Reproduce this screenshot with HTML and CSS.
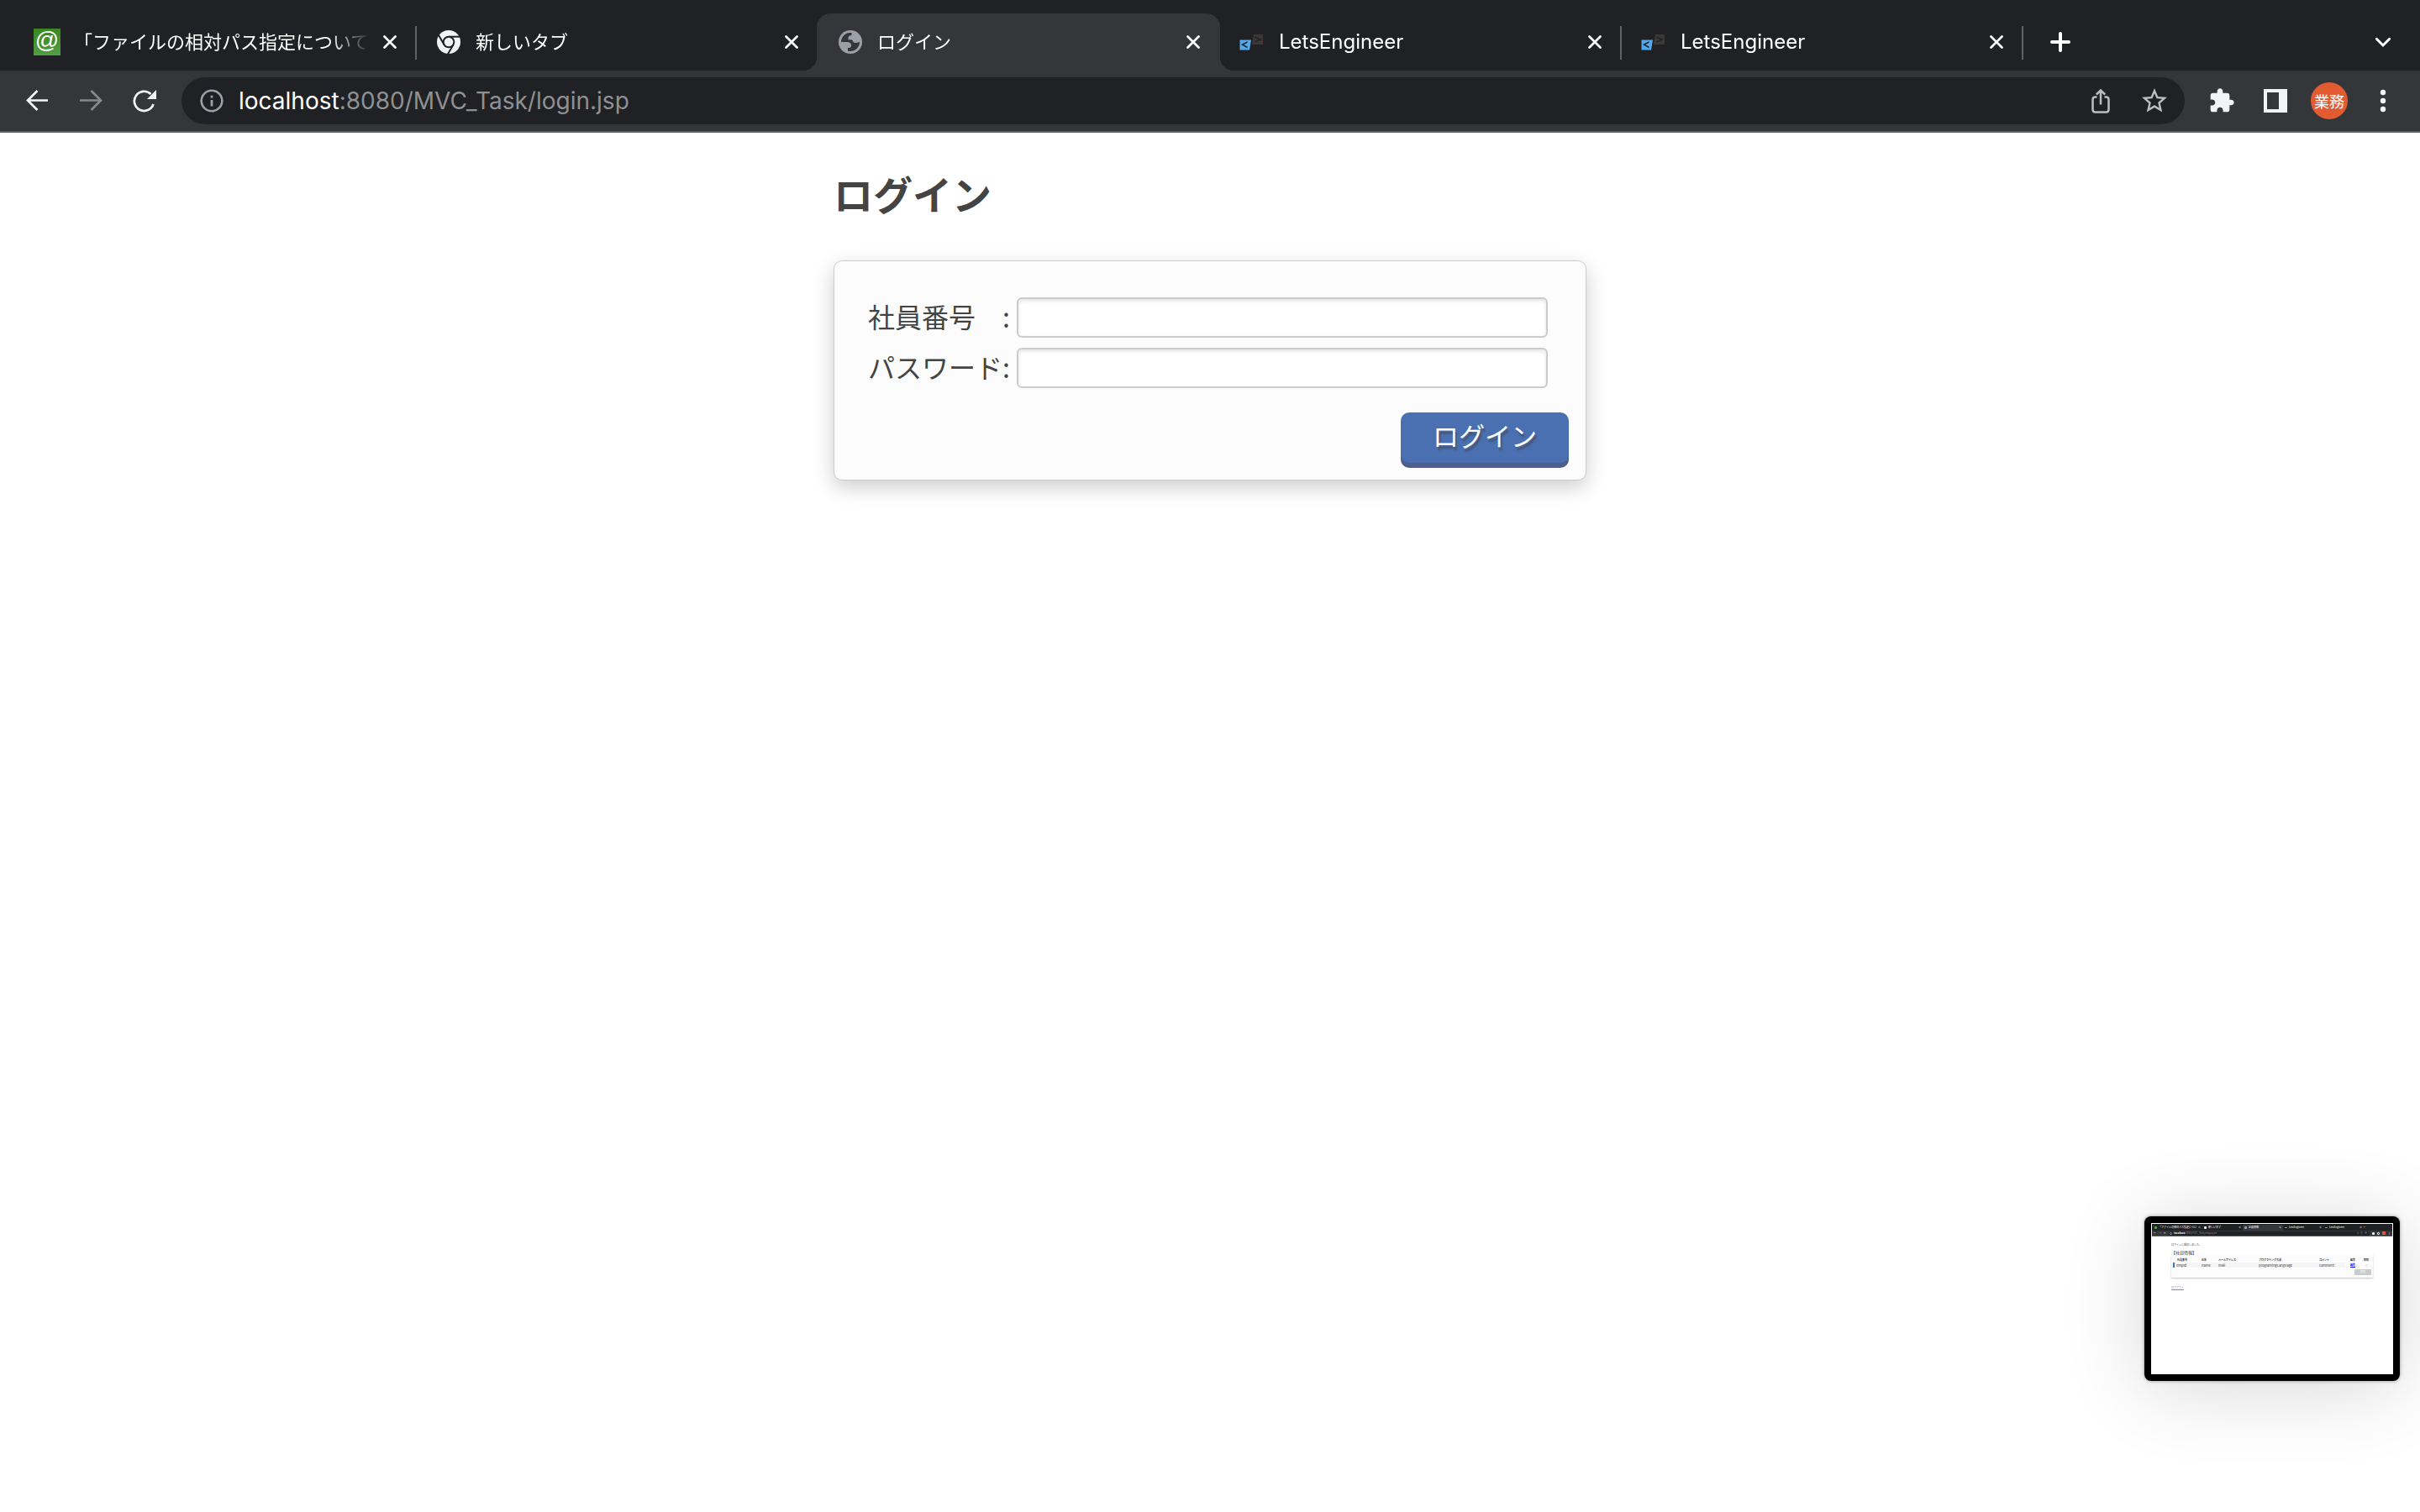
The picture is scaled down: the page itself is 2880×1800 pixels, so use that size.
FILE: index.html
```html
<!DOCTYPE html>
<html lang="ja">
<head>
<meta charset="utf-8">
<meta name="viewport" content="width=device-width, initial-scale=1">
<title>ログイン</title>
<link rel="stylesheet" href="styles.css">
</head>
<body>
<svg class="sprite" aria-hidden="true">
  <symbol id="close" viewBox="0 0 16 16"><path d="M1.5 1.5 14.5 14.5M14.5 1.5 1.5 14.5" fill="none" stroke="currentColor" stroke-width="2.7" stroke-linecap="round"/></symbol>
  <symbol id="lets" viewBox="0 0 32 32">
    <path d="M1.5 13.500H15L13 25.500H1.500Z" fill="#55a9e8"/>
    <path d="M18 7H29V19H16Z" fill="#3c3838"/>
    <path d="M10.500 16 4.500 19 10.500 22.500" fill="none" stroke="#1d2733" stroke-width="1.6"/>
    <path d="M19.500 10 26 13 19.500 16" fill="none" stroke="#242222" stroke-width="1.4"/>
  </symbol>
</svg>

<header class="browser">
  <nav class="tabs" aria-label="タブ">
    <div class="tab tab-divided">
      <span class="favicon favicon-at">@</span>
      <span class="tab-title">「ファイルの相対パス指定について</span>
      <button class="icon-button" aria-label="閉じる"><svg class="icon-close"><use href="#close"/></svg></button>
    </div>
    <div class="tab">
      <svg class="favicon" viewBox="-16 -16 32 32">
        <circle r="14" fill="#f1f3f4"/>
        <circle r="7.300" fill="#202124"/>
        <g stroke="#202124" stroke-width="2">
          <path d="M0-6.300H16"/>
          <path d="M0-6.300H16" transform="rotate(120)"/>
          <path d="M0-6.300H16" transform="rotate(240)"/>
        </g>
        <circle r="5.300" fill="#f1f3f4"/>
      </svg>
      <span class="tab-title">新しいタブ</span>
      <button class="icon-button" aria-label="閉じる"><svg class="icon-close"><use href="#close"/></svg></button>
    </div>
    <div class="tab tab-active">
      <svg class="favicon" viewBox="-2 -2 32 32">
        <circle cx="14" cy="14" r="14" fill="#9aa0a6"/>
        <path d="M3 14A11 11 0 0 1 15.500 3V6C12 6 11 8 11.700 11.200 14.500 11.200 16.500 10.800 17 13 17.500 15.500 21 15.500 25 14A11 11 0 0 1 14 25H11V21C14 21.500 15 20 15 18 15 15 13 14 9 14Z" fill="#35363a"/>
      </svg>
      <span class="tab-title">ログイン</span>
      <button class="icon-button" aria-label="閉じる"><svg class="icon-close"><use href="#close"/></svg></button>
    </div>
    <div class="tab tab-divided">
      <svg class="favicon"><use href="#lets"/></svg>
      <span class="tab-title tab-title-latin">LetsEngineer</span>
      <button class="icon-button" aria-label="閉じる"><svg class="icon-close"><use href="#close"/></svg></button>
    </div>
    <div class="tab tab-divided">
      <svg class="favicon"><use href="#lets"/></svg>
      <span class="tab-title tab-title-latin">LetsEngineer</span>
      <button class="icon-button" aria-label="閉じる"><svg class="icon-close"><use href="#close"/></svg></button>
    </div>
    <button class="icon-button new-tab" aria-label="新しいタブ">
      <svg class="icon-24" viewBox="0 0 24 24"><path d="M12 2V22M2 12H22" fill="none" stroke="#fff" stroke-width="4" stroke-linecap="round"/></svg>
    </button>
    <button class="icon-button tab-search" aria-label="タブを検索">
      <svg class="icon-24" viewBox="0 0 24 24"><path d="M4.300 8.300 12 16 19.700 8.300" fill="none" stroke="#fff" stroke-width="3" stroke-linecap="round"/></svg>
    </button>
  </nav>

  <div class="toolbar">
    <div class="tools">
      <button class="icon-button" aria-label="戻る"><svg class="icon-28" viewBox="0 0 28 28"><path d="M27 13.500H3M14.500 2 3 13.500 14.500 25" fill="none" stroke="#f1f3f4" stroke-width="2.700"/></svg></button>
      <button class="icon-button" aria-label="進む"><svg class="icon-28" viewBox="0 0 28 28"><path d="M1 13.500H26M14.500 2 26 13.500 14.500 25" fill="none" stroke="#86878a" stroke-width="2.700"/></svg></button>
      <button class="icon-button" aria-label="再読み込み"><svg class="icon-28" viewBox="0 0 28 28"><path d="M21.500 6A11.600 11.600 0 1 0 24.500 18" fill="none" stroke="#f1f3f4" stroke-width="2.700"/><path d="M28 1V12H17Z" fill="#f1f3f4"/></svg></button>
    </div>
    <div class="address">
      <svg class="icon-28" viewBox="0 0 28 28"><circle cx="14" cy="14" r="12.300" fill="none" stroke="#9aa0a6" stroke-width="2.600"/><path d="M12.600 7.800H15.400V10.500H12.600ZM12.600 13H15.400V20.500H12.600Z" fill="#9aa0a6"/></svg>
      <div class="url" role="textbox" aria-label="アドレス"><span class="url-host">localhost</span>:8080/MVC_Task/login.jsp</div>
      <button class="icon-button" aria-label="共有"><svg class="icon-36" viewBox="0 0 36 36"><path d="M13.500 13.500H11.500Q8.500 13.500 8.500 16.500V28.500Q8.500 31.500 11.500 31.500H24.500Q27.500 31.500 27.500 28.500V16.500Q27.500 13.500 24.500 13.500H22.500M18 22.500V6M12.800 10.500 18 5.500 23.200 10.500" fill="none" stroke="#bdbdbe" stroke-width="2.500"/></svg></button>
      <button class="icon-button" aria-label="ブックマーク"><svg class="icon-36" viewBox="0 0 24 24"><path d="M22 9.240l-7.190-.62L12 2 9.190 8.630 2 9.240l5.460 4.730L5.820 21 12 17.270 18.180 21l-1.630-7.030L22 9.240zM12 15.400l-3.760 2.270 1-4.280-3.320-2.880 4.380-.38L12 6.100l1.710 4.040 4.380.38-3.320 2.880 1 4.280L12 15.400z" fill="#bdbdbe"/></svg></button>
    </div>
    <div class="tools">
      <button class="icon-button" aria-label="拡張機能"><svg class="icon-32" viewBox="0 0 24 24"><path d="M20.500 11H19V7c0-1.100-.9-2-2-2h-4V3.500C13 2.120 11.880 1 10.500 1S8 2.120 8 3.500V5H4c-1.100 0-1.990.9-1.990 2v3.800H3.500c1.490 0 2.700 1.210 2.700 2.700s-1.210 2.700-2.700 2.700H2V20c0 1.100.9 2 2 2h3.800v-1.500c0-1.490 1.210-2.700 2.700-2.700 1.490 0 2.700 1.210 2.700 2.700V22H17c1.100 0 2-.9 2-2v-4h1.500c1.380 0 2.500-1.120 2.500-2.500S21.880 11 20.500 11z" fill="#f1f3f4"/></svg></button>
      <button class="icon-button" aria-label="サイドパネル"><svg class="icon-28" viewBox="0 0 28 28"><path d="M0 0H28V28H0ZM4 4V24H18V4Z" fill="#f1f3f4" fill-rule="evenodd"/></svg></button>
      <button class="icon-button avatar" aria-label="プロフィール">業務</button>
      <button class="icon-button" aria-label="メニュー"><svg class="icon-28" viewBox="0 0 28 28"><g fill="#f1f3f4"><circle cx="14" cy="4" r="3.200"/><circle cx="14" cy="14" r="3.200"/><circle cx="14" cy="24" r="3.200"/></g></svg></button>
    </div>
  </div>
</header>

<main class="page">
  <h1 class="page-title">ログイン</h1>
  <form class="card">
    <div class="field">
      <label for="employee">社員番号　:</label>
      <input id="employee" class="field-input" type="text">
    </div>
    <div class="field">
      <label for="password">パスワード:</label>
      <input id="password" class="field-input" type="password">
    </div>
    <div class="actions"><button class="submit" type="submit">ログイン</button></div>
  </form>
</main>

<aside class="preview" aria-label="プレビュー">
  <div class="preview-screen">
    <div class="mini-tabs">
      <span class="mini-tab"><i class="mini-icon mini-green"></i><span class="mini-label">「ファイルの相対パス指定につい</span>×</span>
      <span class="mini-tab"><i class="mini-icon mini-white"></i><span class="mini-label">新しいタブ</span>×</span>
      <span class="mini-tab mini-tab-active"><i class="mini-icon mini-grey"></i><span class="mini-label">社員情報</span>×</span>
      <span class="mini-tab"><i class="mini-icon mini-blue"></i><span class="mini-label">LetsEngineer</span>×</span>
      <span class="mini-tab"><i class="mini-icon mini-blue"></i><span class="mini-label">LetsEngineer</span>×</span>
      <span>+</span>
    </div>
    <div class="mini-toolbar">
      <span>←</span><span class="mini-dim">→</span><span>⟳</span>
      <div class="mini-address"><i class="mini-icon mini-ring"></i><span class="mini-url"><b class="mini-host">localhost</b>:8080/MVC_Task/employee</span><span>⚿</span><span>⇧</span><span>☆</span></div>
      <i class="mini-icon mini-white"></i><i class="mini-icon mini-panel"></i><i class="mini-icon mini-orange"></i><span>⋮</span>
    </div>
    <div class="mini-page">
      <p class="mini-message">ログインに成功しました。</p>
      <p class="mini-title">【社員情報】</p>
      <div class="mini-card">
        <table class="mini-table">
          <colgroup><col class="col-id"><col class="col-name"><col class="col-mail"><col class="col-language"><col class="col-comment"><col class="col-edit"><col></colgroup>
          <thead><tr><th>社員番号</th><th>氏名</th><th>メールアドレス</th><th>プログラミング言語</th><th>コメント</th><th class="mini-edit-cell">編集</th><th>削除</th></tr></thead>
          <tbody><tr><td class="mini-cell mini-first">empId</td><td class="mini-cell">name</td><td class="mini-cell">mail</td><td class="mini-cell">programingLanguage</td><td class="mini-cell">comment</td><td class="mini-edit-cell"><a class="mini-edit" href="#edit">編集</a></td><td><input class="mini-radio" type="radio" aria-label="削除"></td></tr></tbody>
        </table>
        <button class="mini-delete" disabled>削除</button>
      </div>
      <a class="mini-logout" href="#logout">ログアウト</a>
    </div>
  </div>
</aside>
</body>
</html>
```
FILE: styles.css
```css
* { box-sizing: border-box; }

body {
  min-height: 100vh;
  margin: 0;
  background: #fff;
  color: #444;
  font-family: "Noto Sans CJK JP", sans-serif;
}

button, input { font: inherit; }
svg { display: block; flex: none; }
.sprite { position: absolute; width: 0; height: 0; }

/* Browser tabs */
.browser { color: #fff; }

.tabs {
  display: flex;
  align-items: stretch;
  height: 84px;
  padding: 16px 20px 0 16px;
  background: #202124;
}

.tab {
  position: relative;
  display: flex;
  flex: 0 1 480px;
  align-items: center;
  min-width: 0;
  margin-right: -2px;
  padding: 0 24px;
}

.tab-divided::after {
  content: "";
  position: absolute;
  top: 15px;
  right: 0;
  width: 2px;
  height: 40px;
  background: #606164;
}

.tab-active {
  border-radius: 16px 16px 0 0;
  background: #35363a;
}

.tab-active::before,
.tab-active::after {
  content: "";
  position: absolute;
  bottom: 0;
  width: 16px;
  height: 16px;
}

.tab-active::before {
  left: -16px;
  background: radial-gradient(circle at 0 0, #202124 16px, #35363a 16px);
}

.tab-active::after {
  right: -16px;
  background: radial-gradient(circle at 100% 0, #202124 16px, #35363a 16px);
}

.favicon { flex: none; width: 32px; height: 32px; }

.favicon-at {
  background: linear-gradient(#3a8620, #529d45);
  font: 28px/28px "Liberation Sans", sans-serif;
  text-align: center;
}

.tab-title {
  flex: 1;
  min-width: 0;
  margin: 0 16px;
  padding-bottom: 4px;
  overflow: hidden;
  font-size: 22px;
  line-height: 32px;
  white-space: nowrap;
  -webkit-mask-image: linear-gradient(90deg, #000 calc(100% - 48px), transparent);
  mask-image: linear-gradient(90deg, #000 calc(100% - 48px), transparent);
}

.tab-title-latin { padding-bottom: 0; font-family: Inter, sans-serif; font-size: 24px; }

.icon-button {
  display: flex;
  flex: none;
  align-items: center;
  justify-content: center;
  padding: 0;
  border: 0;
  background: none;
  color: #fff;
}

.icon-close { width: 16px; height: 16px; }
.icon-24 { width: 24px; height: 24px; }
.icon-28 { width: 28px; height: 28px; }
.icon-32 { width: 32px; height: 32px; }
.icon-36 { width: 36px; height: 36px; }

.new-tab { width: 48px; margin-left: 22px; }
.tab-search { width: 48px; margin-left: auto; }

/* Address bar */
.toolbar {
  display: flex;
  align-items: center;
  gap: 12px;
  height: 74px;
  padding: 0 12px;
  border-bottom: 2px solid #606164;
  background: #35363a;
}

.tools { display: flex; align-items: center; }
.tools .icon-button { width: 64px; height: 56px; }

.tools .avatar {
  width: 44px;
  height: 44px;
  margin: 0 10px;
  border-radius: 50%;
  background: #e25b31;
  font-size: 18px;
}

.address {
  display: flex;
  flex: 1;
  align-items: center;
  gap: 28px;
  height: 56px;
  min-width: 0;
  padding: 0 18px 0 22px;
  border-radius: 28px;
  background: #202124;
}

.url {
  flex: 1;
  min-width: 0;
  margin-left: -10px;
  overflow: hidden;
  color: #8f9093;
  font: 28px/40px Inter, sans-serif;
  white-space: nowrap;
}

.url-host { color: #fff; }

/* Login form */
.page {
  width: min(100%, 896px);
  margin: 0 auto;
  padding: 36px 0 64px;
}

.page-title {
  margin: 0 0 44px;
  font-size: 47px;
  line-height: 72px;
}

.card {
  padding: 43px 20px 14px 40px;
  border: 1px solid #ccc;
  border-radius: 10px;
  background: #fcfcfc;
  box-shadow: 0 8px 24px rgba(0, 0, 0, .2);
}

.field {
  display: flex;
  align-items: flex-start;
  gap: 8px;
  height: 48px;
  margin-bottom: 12px;
  font-size: 32px;
  line-height: 44px;
  white-space: nowrap;
}

.field-input {
  flex: 1;
  width: 0;
  height: 48px;
  margin-right: 25px;
  padding: 0 8px;
  border: 2px solid #ccc;
  border-radius: 6px;
  background: #fff;
  box-shadow: inset 0 2px 4px rgba(0, 0, 0, .12);
}

.actions { display: flex; justify-content: flex-end; padding-top: 17px; }

.submit {
  width: 200px;
  height: 60px;
  margin-bottom: 6px;
  padding: 0 0 6px;
  border: 0;
  border-radius: 10px;
  background: #4a70b2;
  box-shadow: 0 6px 0 #4e5f8d;
  color: #fff;
  font-size: 31px;
  line-height: 54px;
  text-shadow: 2px 4px 2px rgba(68, 68, 68, .6);
}

/* Floating screen preview */
.preview {
  position: fixed;
  right: 24px;
  bottom: 156px;
  width: 304px;
  padding: 8px;
  border-radius: 8px;
  background: #000;
  box-shadow: 0 0 4px rgba(0, 0, 0, .4), 0 8px 96px rgba(0, 0, 0, .16);
}

.preview-screen {
  height: 180px;
  padding: 1px;
  background: #fff;
  color: #333;
  font-size: 3px;
  line-height: 4px;
}

.mini-tabs {
  display: flex;
  height: 8px;
  padding: 1px 1px 0;
  background: #202124;
  color: #fff;
  line-height: 7px;
}

.mini-tab {
  display: flex;
  flex: 0 0 48px;
  align-items: center;
  gap: 2px;
  padding: 0 2px;
}

.mini-tab-active { background: #35363a; }
.mini-label { flex: 1; overflow: hidden; white-space: nowrap; }

.mini-icon { flex: none; width: 3px; height: 3px; border-radius: 1px; }
.mini-green { background: #52a445; }
.mini-white { background: #eee; }
.mini-grey { background: #9aa0a6; }
.mini-blue { height: 1px; background: #55a9e8; }
.mini-orange { width: 4px; height: 4px; background: #e25b31; }
.mini-panel { border: 1px solid #eee; }
.mini-ring { border: 1px solid #777; }

.mini-toolbar {
  display: flex;
  align-items: center;
  gap: 3px;
  height: 7px;
  padding: 0 2px;
  border-bottom: 1px solid #606164;
  background: #35363a;
  color: #ddd;
}

.mini-dim { color: #86878a; }

.mini-address {
  display: flex;
  flex: 1;
  align-items: center;
  gap: 2px;
  height: 5px;
  padding: 0 3px 0 1px;
  border-radius: 3px;
  background: #202124;
}

.mini-url { flex: 1; color: #86878a; }
.mini-host { color: #fff; }

.mini-page { padding: 8px 23px; }
.mini-message { margin: 0 0 4px; }
.mini-title { margin: 0; font-size: 5px; line-height: 6px; }

.mini-card {
  height: 27px;
  padding: 3px 2px;
  border-radius: 1px;
  background: #fcfcfc;
  box-shadow: 0 1px 2px rgba(0, 0, 0, .25);
}

.mini-table { width: 100%; table-layout: fixed; border-collapse: collapse; }
.mini-table th, .mini-table td { height: 6px; padding: 0; text-align: left; line-height: 5px; white-space: nowrap; }
.col-id { width: 33px; }
.col-name { width: 20px; }
.col-mail { width: 48px; }
.col-language { width: 72px; }
.col-comment { width: 31px; }
.col-edit { width: 22px; }
.mini-table th:first-child { padding-left: 4px; }
.mini-table .mini-edit-cell { padding-left: 6px; }
.mini-table .mini-cell { background: #f5f5f5; font-size: 4px; }
.mini-table .mini-first { padding-left: 2px; border-left: 2px solid #4a70b2; }
.mini-edit { color: #00f; font-weight: 700; }

.mini-radio {
  display: block;
  width: 3px;
  height: 3px;
  margin: 0 0 0 2px;
  appearance: none;
  border: 1px solid #ddd;
  border-radius: 50%;
}

.mini-delete {
  display: block;
  width: 20px;
  height: 7px;
  margin: 2px 0 0 auto;
  padding: 0;
  border: 0;
  border-radius: 1px;
  background: #ccc;
  color: #fff;
  line-height: 5px;
}

.mini-logout { display: inline-block; margin-top: 10px; color: #77f; }
```
